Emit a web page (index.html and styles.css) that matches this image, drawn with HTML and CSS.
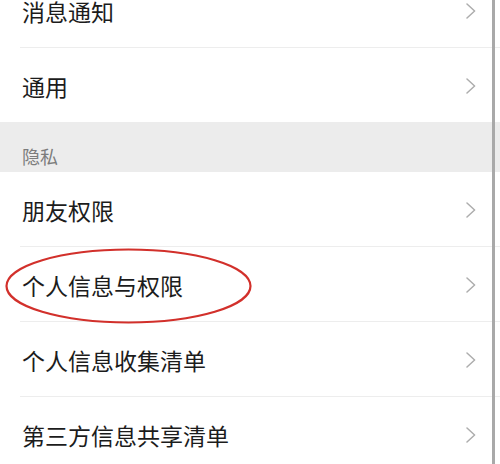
FILE: index.html
```html
<!DOCTYPE html>
<html lang="zh-CN">
<head>
<meta charset="utf-8">
<title>设置</title>
<link rel="stylesheet" href="styles.css">
</head>
<body>
<div class="screen">
  <div class="group first">
    <div class="row"><span class="label">消息通知</span><svg class="chev" viewBox="0 0 10 16"><polyline points="1,1 8.6,8 1,15"/></svg></div>
    <div class="row"><span class="label">通用</span><svg class="chev" viewBox="0 0 10 16"><polyline points="1,1 8.6,8 1,15"/></svg></div>
  </div>
  <div class="section">隐私</div>
  <div class="group">
    <div class="row"><span class="label">朋友权限</span><svg class="chev" viewBox="0 0 10 16"><polyline points="1,1 8.6,8 1,15"/></svg></div>
    <div class="row marked"><span class="label">个人信息与权限</span><svg class="chev" viewBox="0 0 10 16"><polyline points="1,1 8.6,8 1,15"/></svg>
      <svg class="ring" viewBox="0 0 247 76"><ellipse cx="123.5" cy="38" rx="122" ry="36.5"/></svg>
    </div>
    <div class="row"><span class="label">个人信息收集清单</span><svg class="chev" viewBox="0 0 10 16"><polyline points="1,1 8.6,8 1,15"/></svg></div>
    <div class="row"><span class="label">第三方信息共享清单</span><svg class="chev" viewBox="0 0 10 16"><polyline points="1,1 8.6,8 1,15"/></svg></div>
  </div>
  <div class="scrollbar"></div>
</div>
</body>
</html>
```
FILE: styles.css
```css
html, body {
  margin: 0;
  padding: 0;
  background: #ffffff;
}
body {
  width: 500px;
  height: 464px;
  overflow: hidden;
  font-family: "Noto Sans CJK SC", "Noto Sans", sans-serif;
}
.screen {
  position: relative;
  width: 500px;
  height: 464px;
  overflow: hidden;
}
.group.first {
  margin-top: -27px;
}
.row {
  position: relative;
  display: flex;
  align-items: center;
  justify-content: space-between;
  height: 72px;
  margin-left: 20px;
  padding: 2px 24px 0 2px;
  border-bottom: 1px solid #ededed;
}
.group .row:last-child {
  border-bottom: none;
}
.label {
  font-size: 23px;
  color: #1c1c1c;
  line-height: 1;
}
.chev {
  width: 10px;
  height: 16px;
  fill: none;
  stroke: #adadad;
  stroke-width: 1.5;
  stroke-linecap: round;
  stroke-linejoin: round;
}
.section {
  display: flex;
  align-items: center;
  height: 32px;
  padding: 18px 0 0 22px;
  background: #ececec;
  font-size: 18px;
  color: #7c7c7c;
}
.ring {
  position: absolute;
  left: -15px;
  top: 1px;
  width: 247px;
  height: 76px;
  overflow: visible;
  fill: none;
  stroke: #d2302b;
  stroke-width: 2.2;
}
.scrollbar {
  position: absolute;
  top: 0;
  left: 492px;
  width: 3px;
  height: 464px;
  background: #a9a9a9;
}
```
